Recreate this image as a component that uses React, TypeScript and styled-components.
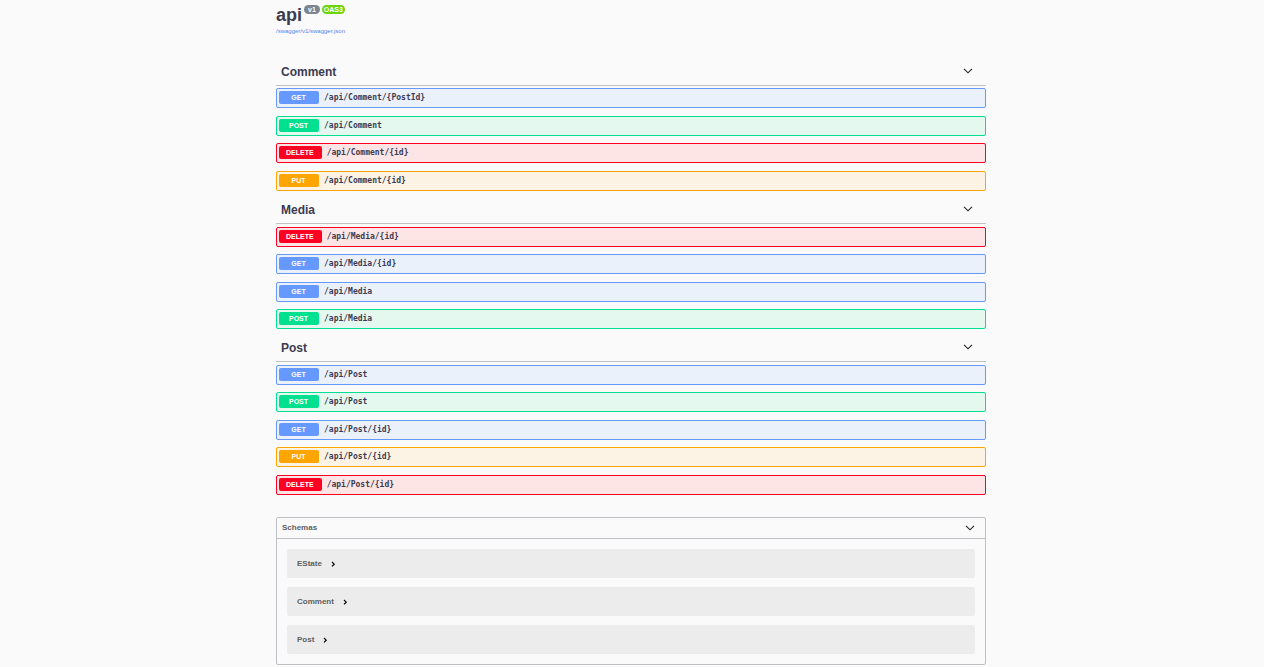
import React from "react";
import styled, { createGlobalStyle } from "styled-components";

type Method = "GET" | "POST" | "DELETE" | "PUT";

const palette: Record<Method, { main: string; tint: string }> = {
  GET: { main: "#6699ff", tint: "#ebf1fb" },
  POST: { main: "#00e091", tint: "#e4f8f0" },
  DELETE: { main: "#ff0022", tint: "#fde5e6" },
  PUT: { main: "#ffa500", tint: "#fcf3e5" },
};

const groups: { name: string; operations: [Method, string][] }[] = [
  {
    name: "Comment",
    operations: [
      ["GET", "/api/Comment/{PostId}"],
      ["POST", "/api/Comment"],
      ["DELETE", "/api/Comment/{id}"],
      ["PUT", "/api/Comment/{id}"],
    ],
  },
  {
    name: "Media",
    operations: [
      ["DELETE", "/api/Media/{id}"],
      ["GET", "/api/Media/{id}"],
      ["GET", "/api/Media"],
      ["POST", "/api/Media"],
    ],
  },
  {
    name: "Post",
    operations: [
      ["GET", "/api/Post"],
      ["POST", "/api/Post"],
      ["GET", "/api/Post/{id}"],
      ["PUT", "/api/Post/{id}"],
      ["DELETE", "/api/Post/{id}"],
    ],
  },
];

const schemas = ["EState", "Comment", "Post"];

const GlobalStyle = createGlobalStyle`
  *, *::before, *::after { box-sizing: border-box; }
  body {
    margin: 0;
    background: #fafafa;
    color: #3b3b51;
    font-family: "Liberation Sans", Arial, sans-serif;
  }
  button {
    margin: 0;
    border: 0;
    background: none;
    color: inherit;
    font: inherit;
    text-align: left;
    cursor: pointer;
  }
`;

const Page = styled.main`
  max-width: 730px;
  margin: 0 auto;
  padding: 4px 11px 2px 9px;
`;

const Info = styled.header`
  margin-bottom: 25px;
`;

const TitleRow = styled.div`
  display: flex;
  align-items: flex-start;
  gap: 2px;
`;

const Title = styled.h1`
  margin: 0;
  font-size: 18px;
  line-height: 22px;
`;

const Version = styled.span<{ $color: string }>`
  margin-top: 1px;
  padding: 0 4px;
  border-radius: 5px;
  background: ${(p) => p.$color};
  color: #fff;
  font-size: 7px;
  font-weight: 700;
  line-height: 9px;

  & + & {
    padding: 0 2px;
  }
`;

const SpecLink = styled.a`
  display: block;
  width: fit-content;
  color: #4a88ee;
  font-size: 6px;
  line-height: 10px;
  text-decoration: none;
`;

const Group = styled.section`
  --odd-gap: 7px;
  --even-gap: 8px;

  &:first-of-type {
    --odd-gap: 8px;
    --even-gap: 7px;
  }
`;

const GroupTitle = styled.h2`
  margin: 0 0 3px;
  border-bottom: 1px solid #c1c2c6;
  font-size: 12px;

  ${Group}:first-of-type & {
    margin-bottom: 2px;
  }
`;

const GroupToggle = styled.button`
  display: flex;
  align-items: center;
  justify-content: space-between;
  width: 100%;
  height: 24px;
  padding: 0 13px 2px 5px;
  line-height: 14px;

  svg {
    margin-bottom: 2px;
  }
`;

const Operations = styled.ul`
  margin: 0 0 8px;
  padding: 0;
  list-style: none;
`;

const OperationItem = styled.li`
  &:nth-child(odd) {
    margin-bottom: var(--odd-gap);
  }
  &:nth-child(even) {
    margin-bottom: var(--even-gap);
  }
  &:last-child {
    margin-bottom: 0;
  }
`;

const Operation = styled.button<{ $method: Method }>`
  && {
    display: flex;
    align-items: center;
    gap: 5px;
    width: 100%;
    height: 20px;
    padding: 2px 2px 3px;
    border: 1px solid ${(p) => palette[p.$method].main};
    border-radius: 2px;
    background: ${(p) => palette[p.$method].tint};
  }
`;

const MethodBadge = styled.span<{ $method: Method }>`
  min-width: 40px;
  padding: 0 8px 0 7px;
  border-radius: 2px;
  background: ${(p) => palette[p.$method].main};
  color: #fff;
  font-size: 7px;
  font-weight: 700;
  line-height: 13px;
  text-align: center;
`;

const Path = styled.span`
  font-family: "DejaVu Sans Mono", monospace;
  font-size: 8px;
  font-weight: 700;
  line-height: 11px;
`;

const Models = styled.section`
  margin-top: 22px;
  padding-bottom: 10px;
  border: 1px solid #bebfc5;
  border-radius: 2px;
  color: #606060;
`;

const ModelsTitle = styled.h2`
  margin: 0 0 10px;
  border-bottom: 1px solid #bebfc5;
  font-size: 8px;
`;

const ModelsToggle = styled.button`
  display: flex;
  align-items: center;
  justify-content: space-between;
  width: 100%;
  height: 20px;
  padding: 0 10px 0 5px;
  line-height: 10px;
`;

const ModelList = styled.div`
  display: flex;
  flex-direction: column;
  gap: 9px;
  padding: 0 10px;
`;

const Model = styled.button`
  && {
    display: flex;
    align-items: center;
    gap: 9px;
    height: 29px;
    padding: 0 10px;
    border-radius: 2px;
    background: #ececec;
    font-size: 8px;
    font-weight: 700;
    line-height: 10px;
  }
`;

const ChevronDown = () => (
  <svg width="10" height="6" viewBox="0 0 10 6" fill="none" stroke="#222" strokeWidth="1.1" aria-hidden="true">
    <path d="M1 .8 5 4.8 9 .8" />
  </svg>
);

const ChevronRight = () => (
  <svg width="5" height="6" viewBox="0 0 5 6" fill="none" stroke="#000" strokeWidth="1.2" aria-hidden="true">
    <path d="M1 1 3.2 3.2 1 5.4" />
  </svg>
);

export default function App() {
  return (
    <>
      <GlobalStyle />
      <Page>
        <Info>
          <TitleRow>
            <Title>api</Title>
            <Version $color="#7d8492">v1</Version>
            <Version $color="#6bd40a">OAS3</Version>
          </TitleRow>
          <SpecLink href="/swagger/v1/swagger.json">/swagger/v1/swagger.json</SpecLink>
        </Info>

        {groups.map((group) => (
          <Group key={group.name}>
            <GroupTitle>
              <GroupToggle type="button" aria-expanded="true">
                {group.name}
                <ChevronDown />
              </GroupToggle>
            </GroupTitle>
            <Operations>
              {group.operations.map(([method, path]) => (
                <OperationItem key={method + path}>
                  <Operation type="button" $method={method}>
                    <MethodBadge $method={method}>{method}</MethodBadge>
                    <Path>{path}</Path>
                  </Operation>
                </OperationItem>
              ))}
            </Operations>
          </Group>
        ))}

        <Models>
          <ModelsTitle>
            <ModelsToggle type="button" aria-expanded="true">
              Schemas
              <ChevronDown />
            </ModelsToggle>
          </ModelsTitle>
          <ModelList>
            {schemas.map((name) => (
              <Model key={name} type="button" aria-expanded="false">
                {name}
                <ChevronRight />
              </Model>
            ))}
          </ModelList>
        </Models>
      </Page>
    </>
  );
}
